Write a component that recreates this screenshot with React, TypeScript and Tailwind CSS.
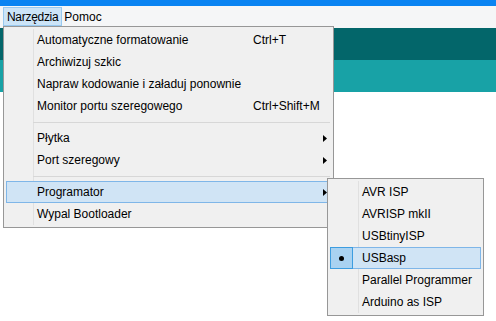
import React from "react";

const font = { fontFamily: '"Liberation Sans", Arial, sans-serif' };

function Arrow() {
  return (
    <svg width="4" height="7" viewBox="0 0 4 7" className="block">
      <path d="M0 0 L4 3.5 L0 7 Z" fill="#000" />
    </svg>
  );
}

type Item = { label: string; shortcut?: string; arrow?: boolean; hl?: boolean };

function MenuItem({ item }: { item: Item }) {
  return (
    <div
      className={
        "flex h-[22px] items-center border pr-[3px] " +
        (item.hl ? "border-[#7fb6e8] bg-[#d0e4f5]" : "border-transparent")
      }
    >
      <span className="w-[246px] shrink-0 pl-[30px]">{item.label}</span>
      {item.shortcut && <span>{item.shortcut}</span>}
      {item.arrow && (
        <span className="ml-auto">
          <Arrow />
        </span>
      )}
    </div>
  );
}

function Sep() {
  return (
    <div className="h-[10px] pl-[27px] pt-[5px]">
      <div className="h-px bg-[#d7d7d7] mr-[1px]" />
    </div>
  );
}

export default function App() {
  const sub = ["AVR ISP", "AVRISP mkII", "USBtinyISP", "USBasp", "Parallel Programmer", "Arduino as ISP"];
  return (
    <div className="relative w-[496px] h-[321px] overflow-hidden bg-white text-[12px] text-black" style={font}>
      <div className="h-[6px] bg-[#0a84f2]" />
      <div className="flex h-[22px] items-start bg-[#f5f6f7] pl-[3px] pt-[1px]">
        <div className="flex h-[19px] items-center border border-[#99c9ef] bg-[#cce4f7] px-[3px] tracking-[-0.3px]">Narzędzia</div>
        <div className="flex h-[19px] items-center px-[2px]">Pomoc</div>
      </div>
      <div className="h-[32px] bg-[#03666a]" />
      <div className="h-[32px] bg-[#18a2a6]" />

      <div className="absolute left-[3px] top-[26px] w-[331px] h-[202px] border border-[#979797] bg-[#f0f0f0] p-[2px]">
        <div className="absolute left-[29px] top-[2px] bottom-[2px] w-px bg-[#e0e0e0]" />
        <div className="relative flex flex-col">
          <MenuItem item={{ label: "Automatyczne formatowanie", shortcut: "Ctrl+T" }} />
          <MenuItem item={{ label: "Archiwizuj szkic" }} />
          <MenuItem item={{ label: "Napraw kodowanie i załaduj ponownie" }} />
          <MenuItem item={{ label: "Monitor portu szeregowego", shortcut: "Ctrl+Shift+M" }} />
          <Sep />
          <MenuItem item={{ label: "Płytka", arrow: true }} />
          <MenuItem item={{ label: "Port szeregowy", arrow: true }} />
          <Sep />
          <MenuItem item={{ label: "Programator", arrow: true, hl: true }} />
          <MenuItem item={{ label: "Wypal Bootloader" }} />
        </div>
      </div>

      <div className="absolute left-[327px] top-[178px] w-[157px] h-[138px] border border-[#979797] bg-[#f0f0f0] p-[2px]">
        <div className="absolute left-[30px] top-[2px] bottom-[2px] w-px bg-[#e0e0e0]" />
        <div className="relative flex flex-col">
          {sub.map((s) => {
            const sel = s === "USBasp";
            return (
              <div
                key={s}
                className={
                  "flex h-[22px] items-center border " +
                  (sel ? "border-[#7fb6e8] bg-[#d0e4f5]" : "border-transparent")
                }
              >
                <div
                  className={
                    "-my-px -ml-px flex h-[22px] w-[23px] shrink-0 items-center justify-center border " +
                    (sel ? "border-[#3d9de0] bg-[#a9d2f1]" : "border-transparent")
                  }
                >
                  {sel && <div className="h-[5px] w-[5px] rounded-full bg-black" />}
                </div>
                <span className="pl-[9px]">{s}</span>
              </div>
            );
          })}
        </div>
      </div>
    </div>
  );
}
